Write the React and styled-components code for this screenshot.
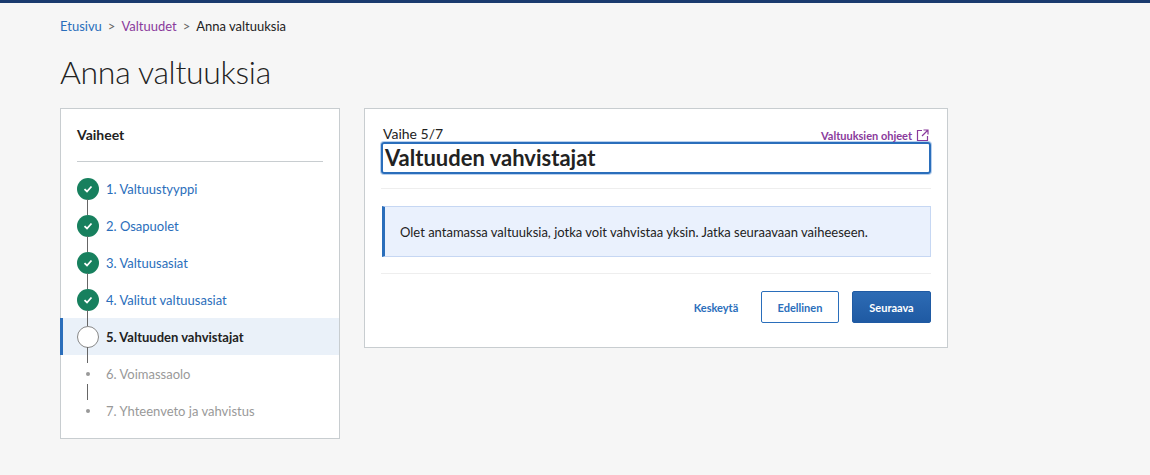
import React from "react";
import styled, { createGlobalStyle } from "styled-components";

const G = createGlobalStyle`
  html,body{margin:0;padding:0;background:#f6f6f6;font-family:Lato,"Noto Sans",sans-serif;color:#222;}
  *{box-sizing:border-box;}
`;
const TopBar = styled.div`height:3px;background:#1a3a6e;`;
const Page = styled.div`padding:14px 60px 0;`;
const Crumbs = styled.div`font-size:13px;display:flex;gap:6px;color:#222;align-items:center;height:18px;`;
const Crumb = styled.span`color:${p => p.c || "#222"};`;
const Title = styled.h1`font-weight:300;font-size:32px;margin:17px 0 0;height:44px;letter-spacing:-0.3px;color:#222;`;
const Row = styled.div`display:flex;gap:24px;align-items:flex-start;margin-top:12px;`;
const Side = styled.div`width:280px;height:331px;background:#fff;border:1px solid #c8cdd0;padding-top:17px;`;
const SideHead = styled.div`font-weight:700;font-size:14px;margin:0 16px;padding-bottom:16px;border-bottom:1px solid #c8cdd0;height:36px;`;
const Steps = styled.div`margin-top:8px;display:flex;flex-direction:column;`;
const Step = styled.div`position:relative;height:37px;display:flex;align-items:center;padding-left:16px;gap:7px;font-size:13px;
  background:${p => p.active ? "#eaf1f9" : "transparent"};
  border-left:3px solid ${p => p.active ? "#2a6ebb" : "transparent"};
  margin-left:-1px;
  color:${p => p.active ? "#222" : p.done ? "#2a6ebb" : "#999"};
  font-weight:${p => p.active ? 700 : 400};
  margin-right:0;`;
const Marker = styled.div`width:22px;height:22px;border-radius:50%;flex:none;display:flex;align-items:center;justify-content:center;margin-left:-2px;
  background:${p => p.done ? "#17805e" : p.active ? "#fff" : "transparent"};
  border:${p => p.active ? "1px solid #888" : "none"};`;
const Dot = styled.div`width:4px;height:4px;border-radius:50%;background:#999;`;
const Tick = styled.div`position:absolute;left:${p => p.l}px;width:1px;height:8px;background:#666;${p => p.top ? "top:0" : "bottom:0"};`;
const Main = styled.div`width:584px;background:#fff;border:1px solid #c8cdd0;padding:16px 16px 24px;`;
const HeadRow = styled.div`display:flex;justify-content:space-between;align-items:flex-end;padding:0 2px;`;
const Phase = styled.div`font-size:14px;`;
const Help = styled.a`color:#8a3a9c;font-size:11px;font-weight:700;display:flex;align-items:center;gap:4px;text-decoration:none;`;
const H2 = styled.h2`margin:0;font-size:22px;font-weight:700;border:2px solid #2a6ebb;border-radius:3px;padding:0 2px;height:32px;line-height:28px;box-shadow:0 0 0 1px #b8d0ee;`;
const Hr = styled.div`height:1px;background:#eee;margin:${p => p.m};`;
const Info = styled.div`margin:0 0 0 1px;height:51px;background:#eaf1fd;border:1px solid #c6d7f3;border-left:3px solid #2a6ebb;font-size:13px;padding-left:15px;display:flex;align-items:center;`;
const Buttons = styled.div`display:flex;justify-content:flex-end;align-items:center;gap:13px;`;
const Btn = styled.button`font-family:inherit;font-size:11px;font-weight:700;height:32px;border-radius:2px;cursor:pointer;
  ${p => p.variant === "primary" ? "background:linear-gradient(#2d6bb4,#1f5aa3);color:#fff;border:1px solid #1f5aa3;width:79px;" :
    p.variant === "outline" ? "background:#fff;color:#2a6ebb;border:1px solid #2a6ebb;width:78px;" :
    "background:none;border:none;color:#2a6ebb;width:60px;margin-right:2px;"}`;

const steps = [
  ["1. Valtuustyyppi", "done"], ["2. Osapuolet", "done"], ["3. Valtuusasiat", "done"],
  ["4. Valitut valtuusasiat", "done"], ["5. Valtuuden vahvistajat", "active"],
  ["6. Voimassaolo", "todo"], ["7. Yhteenveto ja vahvistus", "todo"],
];

export default function App() {
  return (<>
    <G />
    <TopBar />
    <Page>
      <Crumbs><Crumb c="#2a6ebb">Etusivu</Crumb><Crumb c="#666">&gt;</Crumb><Crumb c="#8a3a9c">Valtuudet</Crumb><Crumb c="#666">&gt;</Crumb><Crumb>Anna valtuuksia</Crumb></Crumbs>
      <Title>Anna valtuuksia</Title>
      <Row>
        <Side>
          <SideHead>Vaiheet</SideHead>
          <Steps>
            {steps.map(([t, s], i) => (
              <Step key={t} active={s === "active"} done={s === "done"}>
                {i > 0 && <Tick top l={24} />}
                {i < steps.length - 1 && <Tick l={24} />}
                <Marker done={s === "done"} active={s === "active"}>
                  {s === "done" && <svg width="10" height="8" viewBox="0 0 10 8"><path d="M1.5 4.2 L4 6.5 L8.5 1.5" stroke="#fff" strokeWidth="1.8" fill="none" /></svg>}
                  {s === "todo" && <Dot />}
                </Marker>
                {t}
              </Step>))}
          </Steps>
        </Side>
        <Main>
          <HeadRow>
            <Phase>Vaihe 5/7</Phase>
            <Help href="#">Valtuuksien ohjeet
              <svg width="13" height="13" viewBox="0 0 13 13" fill="none" stroke="#8a3a9c" strokeWidth="1.2"><path d="M6 1.5H1.5v10h10V7" /><path d="M7.5 1h4.5v4.5M12 1L6 7" /></svg>
            </Help>
          </HeadRow>
          <H2>Valtuuden vahvistajat</H2>
          <Hr m="14px 0 17px" />
          <Info>Olet antamassa valtuuksia, jotka voit vahvistaa yksin. Jatka seuraavaan vaiheeseen.</Info>
          <Hr m="16px 0 17px" />
          <Buttons>
            <Btn>Keskeytä</Btn>
            <Btn variant="outline">Edellinen</Btn>
            <Btn variant="primary">Seuraava</Btn>
          </Buttons>
        </Main>
      </Row>
    </Page>
  </>);
}
